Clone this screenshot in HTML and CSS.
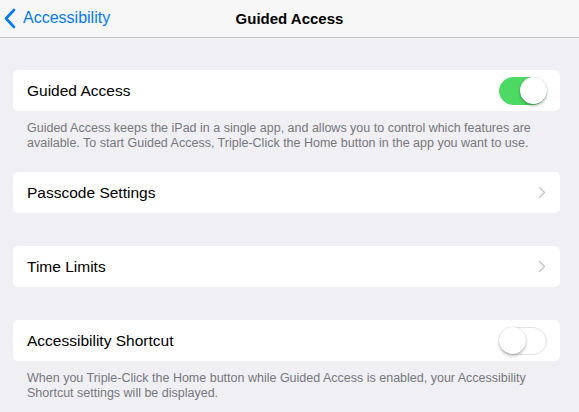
FILE: index.html
```html
<!doctype html>
<html lang="en-us">
  <head>
    <meta charset="utf-8">
    <title>Guided Access</title>
    <link rel="stylesheet" href="styles.css">
  </head>
  <body>
    <div class="navbar">
      <a class="back" href="#">
        <svg class="back-chev" width="12" height="21" viewBox="0 0 12 21"><path d="M10 2 L2 10.5 L10 19" fill="none" stroke="#007aff" stroke-width="2.6" stroke-linecap="round" stroke-linejoin="round"/></svg>
        <span>Accessibility</span>
      </a>
      <div class="title">Guided Access</div>
    </div>

    <div class="content">
      <div class="group first">
        <div class="cell">
          <span class="label">Guided Access</span>
          <span class="switch on"><span class="knob"></span></span>
        </div>
      </div>
      <div class="footer">Guided Access keeps the iPad in a single app, and allows you to control which features are available. To start Guided Access, Triple-Click the Home button in the app you want to use.</div>

      <div class="group">
        <div class="cell">
          <span class="label">Passcode Settings</span>
          <svg class="chev" width="8" height="13" viewBox="0 0 8 13"><path d="M1.5 1.5 L6.5 6.5 L1.5 11.5" fill="none" stroke="#c7c7cc" stroke-width="1.5" stroke-linecap="round" stroke-linejoin="round"/></svg>
        </div>
      </div>

      <div class="group">
        <div class="cell">
          <span class="label">Time Limits</span>
          <svg class="chev" width="8" height="13" viewBox="0 0 8 13"><path d="M1.5 1.5 L6.5 6.5 L1.5 11.5" fill="none" stroke="#c7c7cc" stroke-width="1.5" stroke-linecap="round" stroke-linejoin="round"/></svg>
        </div>
      </div>

      <div class="group">
        <div class="cell">
          <span class="label">Accessibility Shortcut</span>
          <span class="switch"><span class="knob"></span></span>
        </div>
      </div>
      <div class="footer">When you Triple-Click the Home button while Guided Access is enabled, your Accessibility Shortcut settings will be displayed.</div>
    </div>
  </body>
</html>
```

FILE: styles.css
```css
html, body
{
  margin: 0;
  padding: 0;
}

body
{
  background-color: #efeff4;
  font-family: "Liberation Sans", Arial, sans-serif;
  color: #000;
  width: 579px;
  height: 412px;
  overflow: hidden;
}

.navbar
{
  position: relative;
  height: 37px;
  background-color: #f7f7f8;
  border-bottom: 1px solid #c8c7cc;
  display: flex;
  align-items: center;
  justify-content: center;
}

.back
{
  position: absolute;
  left: 4px;
  top: 0;
  height: 36px;
  display: flex;
  align-items: center;
  gap: 7px;
  color: #007aff;
  text-decoration: none;
  font-size: 16px;
}

.title
{
  font-weight: bold;
  font-size: 15px;
}

.content
{
  padding: 0 19px 0 13px;
}

.group
{
  margin-top: 33px;
}

.group.first
{
  margin-top: 32px;
}

.footer + .group
{
  margin-top: 21px;
}

.cell
{
  background-color: #fff;
  border-radius: 5px;
  height: 41px;
  display: flex;
  align-items: center;
  justify-content: space-between;
  padding: 0 14px 0 14px;
}

.label
{
  font-size: 15.5px;
}

.switch
{
  position: relative;
  width: 48px;
  height: 28px;
  border-radius: 15px;
  box-sizing: border-box;
  border: 1.5px solid #e3e3e6;
  background-color: #fff;
  margin-right: -1px;
}

.switch .knob
{
  position: absolute;
  top: -1px;
  left: -1px;
  width: 27px;
  height: 27px;
  border-radius: 50%;
  background-color: #fff;
  box-shadow: 0 2px 3px rgba(0,0,0,0.25), 0 0 0 0.5px rgba(0,0,0,0.08);
}

.switch.on
{
  background-color: #4cd964;
  border-color: #4cd964;
}

.switch.on .knob
{
  left: auto;
  right: -1px;
}

.footer
{
  font-size: 12.5px;
  line-height: 15px;
  color: #77777c;
  padding: 10px 20px 0 14px;
}
```
